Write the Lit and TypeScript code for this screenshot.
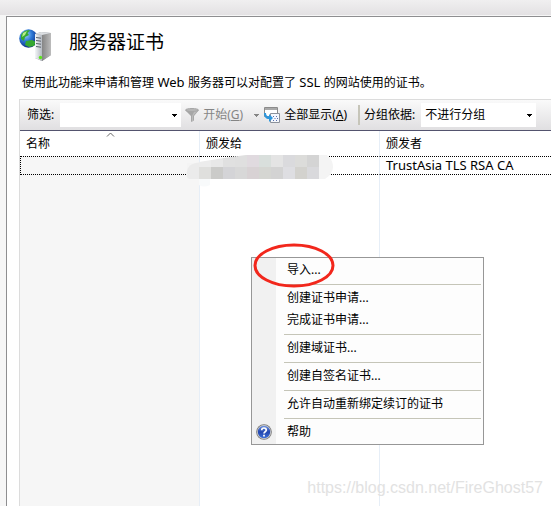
import { LitElement, html, css, svg } from "lit";
import { customElement } from "lit/decorators.js";

const arrow = html`<svg class="arrow" width="5" height="3" viewBox="0 0 5 3" shape-rendering="crispEdges" aria-hidden="true"><path d="M0 0h5v1H0zM1 1h3v1H1zM2 2h1v1H2z" fill="currentColor" /></svg>`;

const serverIcon = html`<svg width="34" height="34" viewBox="0 0 34 34" aria-hidden="true">
  <defs>
    <radialGradient id="sea" cx="35%" cy="30%" r="75%"><stop offset="0" stop-color="#9fd4ff" /><stop offset=".45" stop-color="#2d78d6" /><stop offset="1" stop-color="#0a2378" /></radialGradient>
    <linearGradient id="side" x1="0" x2="1"><stop offset="0" stop-color="#858585" /><stop offset="1" stop-color="#bcbcbc" /></linearGradient>
    <linearGradient id="front" x1="0" x2="1"><stop offset="0" stop-color="#f4f6f8" /><stop offset="1" stop-color="#b4bac2" /></linearGradient>
  </defs>
  <circle cx="9.500" cy="10.500" r="9.300" fill="url(#sea)" />
  <path d="M2 7C4 3 8 1.500 11 2.500L8.500 5 10 7 6 9 5 13 2 11zM7 13l6-1 4 2-2 4-5 1-4-2z" fill="#35a830" />
  <path d="M4 5l4-2-2 4-3 2z" fill="#b9ee8c" />
  <path d="M16 6l6-2 10 1v22l-9 6-7-3z" fill="#8b8f94" />
  <path d="M23 7l9-2v22l-9 6z" fill="url(#side)" />
  <path d="M16 6l7 1v26l-7-3z" fill="url(#front)" />
  <path d="M16 6l6-2 10 1-9 2z" fill="#dcdfe2" />
  <path d="M17 9.500l5 .7M17 12.500l5 .7M17 15.500l5 .7M17 18.500l5 .7" stroke="#59616b" />
  <circle cx="21.500" cy="29.500" r="1.700" fill="#5be51e" />
</svg>`;

const funnelIcon = html`<svg width="15" height="14" viewBox="0 0 15 14" aria-hidden="true">
  <path d="M0 2L6 8v6l3-1.500V8l5-6z" fill="#a6a6a6" /><path d="M8 8l5-6h-3L7 8v5.500l1-.5z" fill="#bcbcbc" /><ellipse cx="7" cy="2" rx="6.500" ry="1.500" fill="#b7b7b7" stroke="#a6a6a6" />
</svg>`;

const showAllIcon = html`<svg width="17" height="16" viewBox="0 0 17 16" aria-hidden="true">
  <path d="M.5 .5h13v9H.5z" fill="#fff" stroke="#8b8b8b" /><path d="M1 1h12v2H1z" fill="#a9a9a9" />
  <path d="M6.500 6.500h9v9h-9z" fill="#f5f8fd" stroke="#8b919b" />
  <path d="M9 9h1v1H9zM12 9h1v1h-1zM10.500 11h1v1h-1zM13 11h1v1h-1zM9 13h1v1H9zM12 13h1v1h-1z" fill="#5a6fae" />
  <path d="M0 6c0 4 2 6 5 6v3l4-4-4-4v2.500C3 9.500 2 8 2 6z" fill="#2d96dc" />
</svg>`;

const helpIcon = html`<svg width="16" height="16" viewBox="0 0 16 16" aria-hidden="true">
  <defs><linearGradient id="orb" x2="0" y2="1"><stop offset="0" stop-color="#6f93e0" /><stop offset=".5" stop-color="#2246ae" /><stop offset="1" stop-color="#3e70d8" /></linearGradient></defs>
  <circle cx="8" cy="8" r="7.800" fill="#777" /><circle cx="8" cy="8" r="7" fill="#d0d0d0" /><circle cx="8" cy="8" r="6.200" fill="url(#orb)" />
  <path d="M5.700 6.300C5.700 3.300 10.300 3.300 10.300 6.100 10.300 7.800 8 7.700 8 9.600" fill="none" stroke="#fff" stroke-width="1.700" /><path d="M7.100 10.700h1.800v1.700H7.100z" fill="#fff" />
</svg>`;

const mosaicRows = [
  ["#ececec", "#e8e8e8", "#e0e0e0", "#dfdfdf", "#e0dadf", "#d9dfdc", "#e4e4e4", "#dadadd", "#dcdcda", "#d4d4d4"],
  ["#dfdfdd", "#cbcbc9", "#d4d4d7", "#d8d8d8", "#d8d2d4", "#d5d6d2", "#d3d3d3", "#dedee2", "#d3d2ce", "#d9d9dc"],
];

const mosaic = html`<svg class="mosaic" width="148" height="34" viewBox="0 0 148 34" aria-hidden="true">
  <path d="M13 26h11v6q-6 3-11 0z" fill="#f8fafb" />
  <path d="M14 10H1V26H14zM133 2h8q6 5 6 12t-8 12h-6z" fill="#f4f4f4" />
  <path d="M1 24Q-1 10 14 9.500V26H3z" fill="#ebebeb" />
  <clipPath id="smudge"><path d="M13 9Q35 5 60 2H133V26H13z" /></clipPath>
  <g clip-path="url(#smudge)" shape-rendering="crispEdges">${mosaicRows.map((row, r) => row.map((fill, c) => svg`<rect x=${13 + c * 12} y=${2 + r * 12} width="12" height="12" fill=${fill} />`))}</g>
</svg>`;

const menuGroups = [["导入..."], ["创建证书申请...", "完成证书申请..."], ["创建域证书..."], ["创建自签名证书..."], ["允许自动重新绑定续订的证书"], ["帮助"]];

@customElement("context-menu")
export class ContextMenu extends LitElement {
  static styles = css`
    :host { display: block; }
    .menu { box-sizing: border-box; border: 1px solid #979797; padding: 1px 1px 1px 0; background: linear-gradient(90deg, #f1f1f1 24px, #fdfdfd 24px); }
    .item { display: grid; grid-template-columns: 24px 1fr; column-gap: 11px; align-items: center; width: 100%; height: 22px; padding: 0; border: 0; background: none; font: inherit; color: #000; text-align: left; white-space: nowrap; }
    .icon { display: flex; justify-content: center; }
    .rule { height: 1px; margin: 3px 1px 2px 32px; border: 0; background: #c5c5b8; }
  `;
  render() {
    return html`<div class="menu" role="menu">
      ${menuGroups.map((group, i) => html`${i ? html`<hr class="rule" />` : ""}${group.map(
        (label) => html`<button class="item" role="menuitem"><span class="icon">${label === "帮助" ? helpIcon : ""}</span><span>${label}</span></button>`
      )}`)}
    </div>`;
  }
}

@customElement("app-root")
export class AppRoot extends LitElement {
  static styles = css`
    :host { display: flex; flex-direction: column; min-height: 100vh; position: relative; overflow: hidden; background: #f6f6f6; color: #000; font: 12px/18px "Noto Sans", "Noto Sans CJK SC", sans-serif; }
    .strip { height: 15px; background: linear-gradient(#f0eff0, #e3e1e3); }
    .panel { flex: 1; display: flex; flex-direction: column; margin: 1px 0 0 6px; padding-left: 12px; border: solid #8e8e90; border-width: 1px 0 0 1px; background: #fff; }
    .head { box-sizing: border-box; display: flex; align-items: flex-start; gap: 16px; height: 52px; padding-top: 11px; }
    h1 { margin: 0; font-size: 19px; line-height: 28px; font-weight: 400; }
    .intro { margin: 4px 3px 7px; white-space: nowrap; }
    .latin { font-size: 13px; }
    .grid { flex: 1; display: flex; flex-direction: column; border: solid #dcdcdc; border-width: 1px 0 0 1px; }
    .toolbar { display: flex; align-items: center; height: 30px; padding-left: 7px; white-space: nowrap; background: linear-gradient(#fafafa, #e0dfe1); border-bottom: 1px solid #53536e; }
    .field { display: flex; align-items: center; gap: 6px; }
    .combo { position: relative; display: flex; color: #000; }
    .filter { width: 121px; }
    .group { width: 115px; }
    select { width: 100%; height: 24px; appearance: none; border: 0; border-radius: 0; padding: 0 16px 0 4px; background: #fff; color: #000; font: inherit; }
    .combo .arrow { position: absolute; right: 4px; top: 11px; pointer-events: none; }
    .tool { display: flex; align-items: center; gap: 3px; padding: 0; border: 0; background: none; font: inherit; color: #000; }
    .tool:disabled { color: #858585; }
    .start { margin-left: 4px; }
    .more { margin: 0 5px 0 11px; }
    .divider { width: 2px; height: 20px; margin: 0 4px 0 11px; background: #c6c5b9; }
    table { flex: 1; width: 100%; border-spacing: 0; table-layout: fixed; background: linear-gradient(90deg, #f6f6f6 179px, transparent 179px); }
    .w { width: 180px; }
    tbody, thead, tr { height: 1px; }
    th, td { box-sizing: border-box; padding: 0 6px; border-right: 1px solid #e6eef7; text-align: left; font-weight: 400; white-space: nowrap; }
    th:last-child, td:last-child { border-right: 0; }
    th { position: relative; height: 25px; background: #fff; }
    .sort { position: absolute; left: 86px; top: 1px; }
    .record td { height: 19px; line-height: 17px; border-top: 1px dotted #000; border-bottom: 1px dotted #000; }
    .record td:first-child { border-left: 1px dotted #000; }
    .holder { position: relative; }
    .mosaic { position: absolute; left: -20px; top: -4px; z-index: 1; }
    .rest, .rest td { height: auto; }
    .popup { position: absolute; left: 251px; top: 257px; width: 233px; }
    .ring { position: absolute; left: 252px; top: 243px; }
    .mark { position: absolute; right: 8px; bottom: 8px; font: 16px/20px "Liberation Sans", sans-serif; color: #e2e2e2; }
  `;
  render() {
    return html`
      <div class="strip"></div>
      <main class="panel">
        <header class="head">${serverIcon}<h1>服务器证书</h1></header>
        <p class="intro">使用此功能来申请和管理<span class="latin"> Web </span>服务器可以对配置了<span class="latin"> SSL </span>的网站使用的证书。</p>
        <section class="grid">
          <div class="toolbar">
            <div class="field"><label for="filter">筛选:</label><span class="combo filter"><select id="filter"><option></option></select>${arrow}</span></div>
            <button class="tool start" disabled>${funnelIcon}<span>开始(<u>G</u>)</span></button>
            <button class="tool more" disabled aria-label="开始">${arrow}</button>
            <button class="tool">${showAllIcon}<span>全部显示(<u>A</u>)</span></button>
            <span class="divider"></span>
            <div class="field"><label for="group">分组依据:</label><span class="combo group"><select id="group"><option>不进行分组</option></select>${arrow}</span></div>
          </div>
          <table>
            <colgroup><col class="w" /><col class="w" /><col /></colgroup>
            <thead><tr>
              <th>名称<svg class="sort" width="9" height="5" viewBox="0 0 9 5" aria-hidden="true"><path d="M1 4.500L4.500 1 8 4.500" fill="none" stroke="#666" /></svg></th>
              <th>颁发给</th><th>颁发者</th>
            </tr></thead>
            <tbody>
              <tr class="record"><td></td><td><div class="holder">${mosaic}&nbsp;</div></td><td><span class="latin">TrustAsia TLS RSA CA</span></td></tr>
              <tr class="rest"><td></td><td></td><td></td></tr>
            </tbody>
          </table>
        </section>
      </main>
      <context-menu class="popup"></context-menu>
      <svg class="ring" width="84" height="46" viewBox="0 0 84 46" aria-hidden="true"><ellipse cx="42" cy="22.500" rx="39" ry="20.500" fill="none" stroke="#f2271c" stroke-width="3" /></svg>
      <span class="mark">https://blog.csdn.net/FireGhost57</span>
    `;
  }
}
